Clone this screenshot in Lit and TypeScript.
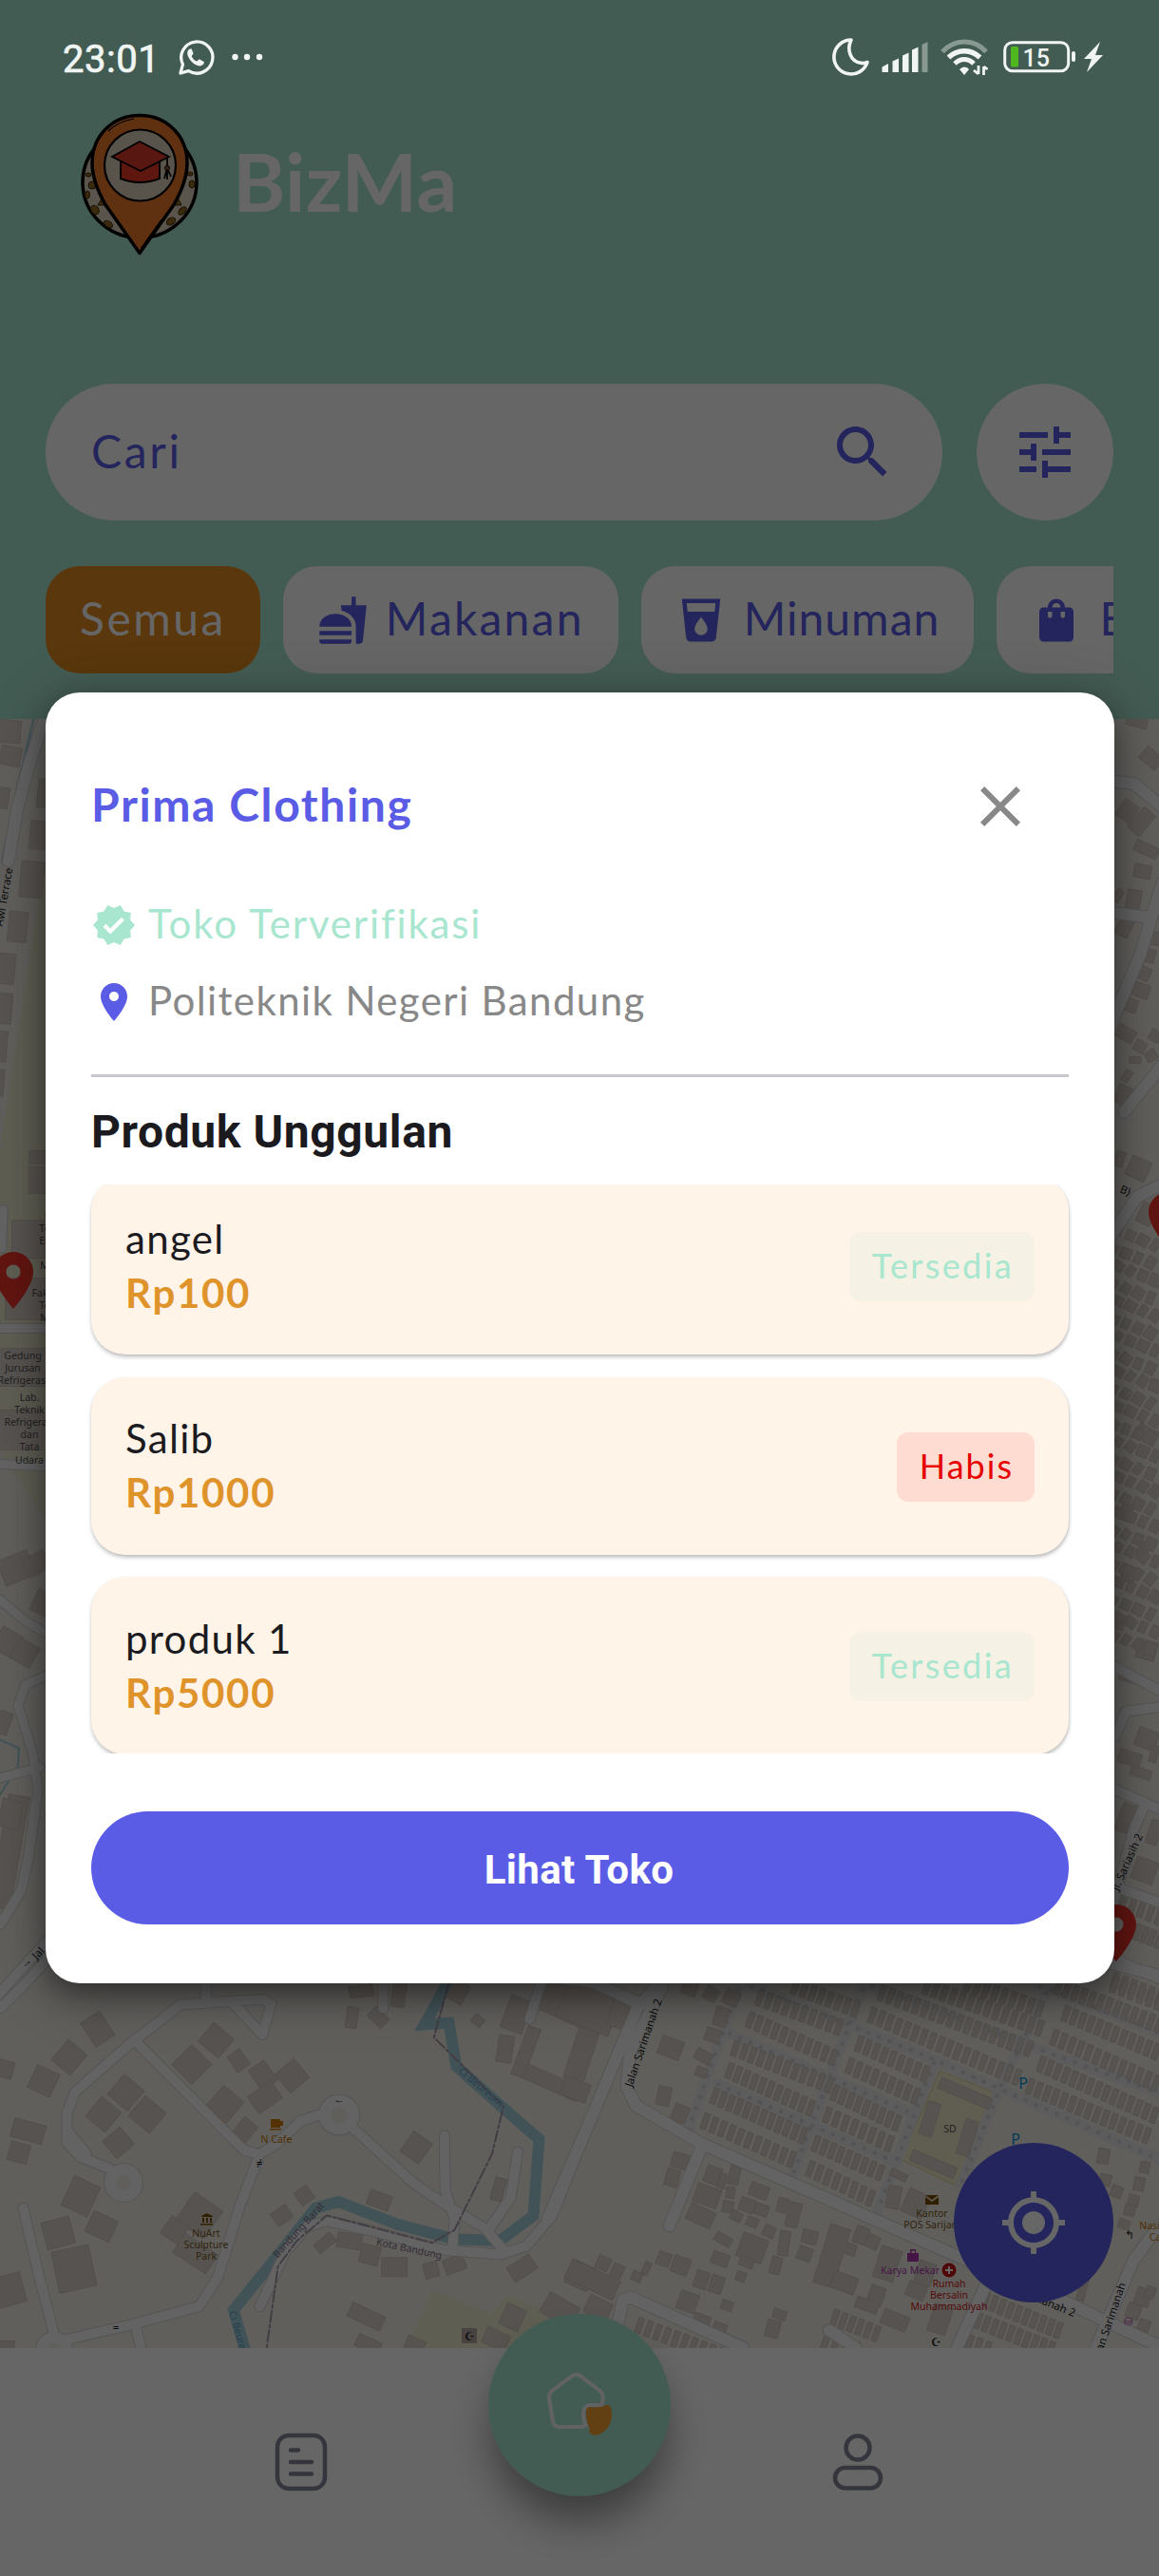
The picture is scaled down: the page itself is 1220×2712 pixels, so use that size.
import { LitElement, html, svg, css } from "lit";
import { customElement, property } from "lit/decorators.js";

const ICONS: Record<string, string> = {
  search:
    "M15.5 14h-.79l-.28-.27C15.41 12.59 16 11.11 16 9.5 16 5.91 13.09 3 9.5 3S3 5.91 3 9.5 5.91 16 9.5 16c1.61 0 3.09-.59 4.23-1.57l.27.28v.79l5 4.99L20.49 19l-4.99-5zm-6 0C7.01 14 5 11.99 5 9.5S7.01 5 9.5 5 14 7.01 14 9.5 11.99 14 9.5 14z",
  tune: "M3 17v2h6v-2H3zM3 5v2h10V5H3zm10 16v-2h8v-2h-8v-2h-2v6h2zM7 9v2H3v2h4v2h2V9H7zm14 4v-2H11v2h10zm-6-4h2V7h4V5h-4V3h-2v6z",
  food: "M18.06 22.99h1.66c.84 0 1.53-.64 1.63-1.46L23 5.05h-5V1h-1.97v4.05h-4.97l.3 2.34c1.71.47 3.31 1.32 4.27 2.26 1.44 1.42 2.43 2.89 2.43 5.29v8.05zM1 21.99V21h15.03v.99c0 .55-.45 1-1.01 1H2.01c-.56 0-1.01-.45-1.01-1zm15.03-7c0-8-15.03-8-15.03 0h15.03zM1.02 17h15v2h-15z",
  drink:
    "M3 2l2.01 18.23C5.13 21.23 5.97 22 7 22h10c1.03 0 1.87-.77 1.99-1.77L21 2H3zm9 17c-1.66 0-3-1.34-3-3 0-2 3-5.4 3-5.4s3 3.4 3 5.4c0 1.66-1.34 3-3 3zm6.33-11H5.67l-.44-4h13.55l-.45 4z",
  bag: "M18 6h-2c0-2.21-1.79-4-4-4S8 3.79 8 6H6c-1.1 0-2 .9-2 2v12c0 1.1.9 2 2 2h12c1.1 0 2-.9 2-2V8c0-1.1-.9-2-2-2zm-8 4c0 .55-.45 1-1 1s-1-.45-1-1V8h2v2zm2-6c1.1 0 2 .9 2 2h-4c0-1.1.9-2 2-2zm4 6c0 .55-.45 1-1 1s-1-.45-1-1V8h2v2z",
  close:
    "M19 6.41L17.59 5 12 10.59 6.41 5 5 6.41 10.59 12 5 17.59 6.41 19 12 13.41 17.59 19 19 17.59 13.41 12z",
  verified:
    "M23 12l-2.44-2.79.34-3.69-3.61-.82-1.89-3.2L12 2.96 8.6 1.5 6.71 4.69 3.1 5.5l.34 3.7L1 12l2.44 2.79-.34 3.7 3.61.82L8.6 22.5l3.4-1.47 3.4 1.46 1.89-3.19 3.61-.82-.34-3.69L23 12zm-12.91 4.72l-3.8-3.81 1.48-1.48 2.32 2.33 5.85-5.87 1.48 1.48-7.33 7.35z",
  place:
    "M12 2C8.13 2 5 5.13 5 9c0 5.25 7 13 7 13s7-7.75 7-13c0-3.87-3.13-7-7-7zm0 9.5c-1.38 0-2.5-1.12-2.5-2.5s1.12-2.5 2.5-2.5 2.5 1.12 2.5 2.5-1.12 2.5-2.5 2.5z",
  locate:
    "M12 8c-2.21 0-4 1.79-4 4s1.79 4 4 4 4-1.79 4-4-1.79-4-4-4zm8.94 3A8.994 8.994 0 0 0 13 3.06V1h-2v2.06A8.994 8.994 0 0 0 3.06 11H1v2h2.06A8.994 8.994 0 0 0 11 20.94V23h2v-2.06A8.994 8.994 0 0 0 20.94 13H23v-2h-2.06zM12 19c-3.87 0-7-3.13-7-7s3.13-7 7-7 7 3.13 7 7-3.13 7-7 7z",
};

@customElement("md-icon")
class MdIcon extends LitElement {
  @property() name = "";
  static styles = css`
    :host {
      display: block;
      flex: none;
      width: 72px;
      height: 72px;
    }
    .glyph {
      display: block;
      width: 100%;
      height: 100%;
      fill: currentColor;
    }
  `;
  render() {
    return html`<svg class="glyph" viewBox="0 0 24 24"><path d=${ICONS[this.name] ?? ""} /></svg>`;
  }
}

@customElement("status-bar")
class StatusBar extends LitElement {
  static styles = css`
    :host {
      display: flex;
      justify-content: space-between;
      align-items: center;
      box-sizing: border-box;
      height: 122px;
      padding: 0 57px 0 66px;
      color: #f0f5f3;
      font: 400 40px/60px Roboto, "Liberation Sans", sans-serif;
    }
    .side {
      display: flex;
      align-items: center;
    }
    .time {
      margin-right: 17px;
      padding-top: 3px;
      letter-spacing: 0.5px;
      -webkit-text-stroke: 0.7px currentColor;
    }
    svg {
      display: block;
    }
    .level {
      font: 500 25px Roboto, sans-serif;
      fill: #f0f5f3;
    }
  `;
  render() {
    return html`
      <div class="side">
        <span class="time">23:01</span>
        <svg width="92" height="42" viewBox="188 40 92 42">
          <path
            d="M193 77l2.4-9.2A16.6 16.6 0 1 1 201.500 74.600z"
            fill="none"
            stroke="#f0f5f3"
            stroke-width="3.300"
            stroke-linejoin="round"
          />
          <path
            d="M203 51.500c-3 1-3.600 5-1.500 9 2.200 4.200 6 7.700 10.500 8.800 3 .7 5.500-1 6-4l-5.200-3-2.600 2.300c-2.700-1.200-4.500-3.100-5.600-5.700l2-2.400-1.900-5z"
            fill="#f0f5f3"
          />
          <g fill="#f0f5f3">
            <circle cx="250.500" cy="60" r="3.200" />
            <circle cx="263" cy="60" r="3.200" />
            <circle cx="276" cy="60" r="3.200" />
          </g>
        </svg>
      </div>
      <div class="side">
        <svg width="288" height="42" viewBox="876 40 288 42">
          <path
            d="M897 42a18 18 0 1 0 17 23.500c-2.300.9-4.500 1.200-7 .8-11-1.800-15-14-10-24.300z"
            fill="none"
            stroke="#f0f5f3"
            stroke-width="3.600"
            stroke-linejoin="round"
          />
          <g fill="#f0f5f3">
            <path d="M929.500 70.500l6.500-3.500v9h-6.500z" />
            <path d="M940.500 64.500l6.500-3v14.500h-6.500z" />
            <path d="M951 58.500l6.500-3v20.500h-6.500z" />
            <path d="M961 52.500l6.500-3v26.500h-6.500z" />
            <path d="M971.500 47l6-3v32h-6z" opacity=".4" />
          </g>
          <g fill="none" stroke="#f0f5f3">
            <path d="M993 54.500c13-14 33-14 46 0" stroke-width="5" opacity=".4" />
            <path d="M999.500 60.500c9.500-9 23.500-9 33 0" stroke-width="5.500" />
            <path d="M1006 67c6-6 14-6 20 0" stroke-width="5" />
          </g>
          <path d="M1011 73q5-5 10 0l-5 6z" fill="#f0f5f3" />
          <path
            d="M1031 69v9m0 0l-5-4M1036.500 79v-9m0 0l4 3"
            fill="none"
            stroke="#f0f5f3"
            stroke-width="2.800"
          />
          <rect
            x="1058.700"
            y="44.700"
            width="67"
            height="30"
            rx="8"
            fill="none"
            stroke="#f0f5f3"
            stroke-width="3"
          />
          <rect x="1065" y="49" width="8" height="21.500" rx="1.500" fill="#4fb81f" />
          <rect x="1129" y="54" width="4" height="11" rx="2" fill="#f0f5f3" />
          <text class="level" x="1077.500" y="70">15</text>
          <path d="M1159 44l-17 18h8l-5 14 17-18h-8z" fill="#f0f5f3" />
        </svg>
      </div>
    `;
  }
}

type Pt = [number, number];

/** Maps the survey units of one tile to screen pixels. */
interface Tile {
  ox: number;
  oy: number;
  sx: number;
  sy: number;
}
const SW: Tile = { ox: 0, oy: 1900, sx: 2.529, sy: 2.613 };
const SE: Tile = { ox: 600, oy: 2060, sx: 2.529, sy: 3 };
const NE: Tile = { ox: 700, oy: 720, sx: 3, sy: 2.24 };
const E: Tile = { ox: 600, oy: 1400, sx: 2.529, sy: 2.24 };
const NW: Tile = { ox: 0, oy: 720, sx: 2.24, sy: 3 };
const W: Tile = { ox: 0, oy: 1220, sx: 2.613, sy: 2.24 };

const project = (t: Tile, x: number, y: number): Pt => [
  Math.round((t.ox + x / t.sx) * 10) / 10,
  Math.round((t.oy + y / t.sy) * 10) / 10,
];
const line = (t: Tile, flat: string) =>
  flat
    .split(" ")
    .map((p) => p.split(",").map(Number) as Pt)
    .map(([x, y]) => project(t, x, y).join(","))
    .join(" ");

const ROADS: [Tile, number, string[]][] = [
  [
    SW,
    10,
    [
      "95,0 75,150 55,240 0,330",
      "0,560 60,500 140,410",
      "-20,540 50,460 125,375",
      "548,480 548,540",
      "350,655 480,550 700,535 722,548 698,632 620,545",
      "365,640 200,790 178,850 178,930 215,970 290,1000",
      "182,900 230,960",
      "365,655 600,900 650,950 690,962 740,930 800,870 860,850",
      "940,890 1100,1040 1170,1090 1290,1165 1340,1225",
      "690,965 640,1100 580,1300 530,1380 350,1430 140,1480",
      "62,1110 100,1280 145,1460",
      "360,1430 375,1495",
      "1183,910 1185,1060 1210,1140 1205,1220",
      "1378,955 1360,1080 1300,1170",
      "692,1380 760,1230 820,1160 870,1145 1000,1175 1180,1225 1330,1237 1400,1215 1470,1130 1568,880",
      "1020,485 1020,560",
      "1440,490 1410,590",
    ],
  ],
  [
    SE,
    12,
    [
      "-60,830 60,500 130,300 180,160 250,70",
      "-10,70 60,80 190,150",
      "245,95 160,300 150,410 175,470 350,590 1030,945 1300,1080 1568,1230",
      "350,600 265,850",
      "130,1150 140,1085 160,1075 460,1235",
      "1568,850 1500,960 1400,1235",
      "690,1180 760,1235",
      "1440,20 1568,60",
      "1110,1030 1030,1235",
    ],
  ],
  [NE, 12, ["1420,230 1480,235 1570,290", "1570,470 1500,640 1410,800", "1420,540 1520,550", "1450,1010 1570,900", "1410,1300 1490,1210 1570,1180"]],
  [E, 10, ["1440,790 1568,850", "1450,960 1480,900 1568,890", "1440,1080 1568,1130", "1440,1370 1500,1180 1530,1120", "1440,1480 1568,1530", "1440,1310 1568,1350"]],
  [NW, 12, ["105,108 70,250 40,400 20,560"]],
  [W, 9, ["-5,400 130,400", "0,720 130,725", "8,120 5,210", "0,1040 70,1090 130,1120", "125,1220 70,1240 50,1290 90,1400 105,1490 90,1568", "0,1460 110,1435"]],
];

const DOTTED = [
  "450,100 310,560",
  "780,100 640,540 590,700",
  "1270,110 1150,400 1040,720",
  "970,330 820,800",
  "420,240 900,490",
  "390,400 850,640",
  "480,90 960,320 1568,640",
  "800,90 1220,280 1568,430",
  "1250,90 1568,240",
  "170,1080 460,1225",
];

const BUILDINGS: [Tile, [number, number, number, number, number][]][] = [
  [
    SW,
    [
      [15, 728, 16, 18, 15], [116, 760, 26, 26, 25], [184, 695, 26, 28, 40], [260, 617, 24, 30, -33],
      [335, 792, 28, 28, 40], [275, 852, 27, 27, 40], [392, 852, 29, 28, 40], [315, 930, 24, 24, -40],
      [75, 898, 34, 20, 15], [50, 957, 21, 20, 15], [215, 1077, 30, 34, 25], [155, 1178, 30, 29, -15],
      [270, 1160, 28, 24, 25], [197, 1277, 40, 44, -12], [25, 1335, 30, 32, -15], [510, 715, 30, 30, 45],
      [575, 648, 28, 26, 40], [635, 704, 16, 20, -35], [598, 825, 28, 30, 40], [652, 895, 18, 22, 40],
      [778, 746, 26, 26, -40], [700, 745, 20, 26, -35], [705, 805, 30, 22, -35], [962, 513, 25, 12, -8],
      [937, 585, 12, 22, 8], [1007, 585, 20, 14, 45], [1062, 520, 14, 28, 8], [1108, 943, 24, 26, 35],
      [1375, 577, 24, 36, 20], [1345, 672, 16, 28, 8], [1272, 594, 12, 10, 40], [1327, 1058, 12, 24, 15],
      [1010, 1088, 24, 16, 20], [810, 1075, 16, 16, -35], [750, 1130, 19, 16, -35], [865, 1205, 22, 12, -40],
      [930, 1200, 26, 16, 8], [985, 1238, 20, 20, 15], [1050, 1272, 27, 20, 0], [1148, 1280, 15, 16, -15],
      [1210, 1265, 22, 16, -20], [1390, 1275, 28, 18, -33], [530, 1130, 36, 36, 35], [465, 1170, 22, 22, 35],
      [520, 1235, 42, 24, 33], [975, 1408, 38, 16, 25], [1365, 1410, 22, 24, 25], [1490, 1390, 36, 24, 30],
      [1545, 1295, 26, 26, 25], [1105, 1485, 20, 14, 25], [1320, 1470, 26, 18, 25], [25, 130, 22, 120, 10],
      [1520, 545, 60, 40, 25], [1400, 680, 14, 54, 20], [1470, 765, 62, 16, 24], [1550, 690, 14, 50, 20],
      [1220, 515, 18, 22, 30], [18, 1485, 16, 8, 0], [980, 1485, 26, 14, 25],
    ],
  ],
  [
    SE,
    [
      [50, 160, 60, 42, 22], [130, 180, 18, 30, 15], [30, 310, 22, 56, 18], [15, 420, 28, 20, 20],
      [268, 288, 24, 20, 20], [318, 100, 16, 14, 20], [375, 118, 14, 14, 30], [430, 130, 16, 16, 25],
      [402, 190, 14, 20, 15], [380, 248, 16, 14, 20], [355, 315, 18, 12, 30], [350, 365, 12, 10, 20],
      [250, 440, 14, 20, 12], [293, 495, 16, 18, 22], [293, 645, 18, 16, 15], [272, 698, 14, 18, 15],
      [380, 690, 16, 18, 20], [438, 687, 11, 22, 12], [405, 708, 8, 16, 15], [365, 755, 26, 20, 20],
      [348, 818, 28, 18, 25], [427, 745, 9, 12, 8], [503, 740, 20, 14, 20], [472, 785, 16, 14, 20],
      [420, 790, 11, 12, 10], [443, 820, 12, 10, 30], [408, 893, 18, 10, 30], [485, 838, 12, 10, 20],
      [510, 800, 14, 12, 20], [530, 868, 12, 12, 25], [595, 815, 13, 26, 15], [566, 785, 11, 15, 15],
      [570, 905, 11, 26, 8], [548, 975, 11, 18, 15], [485, 920, 28, 26, 20], [400, 955, 18, 13, 20],
      [470, 965, 15, 10, 20], [455, 1010, 10, 10, 20], [638, 885, 16, 14, 15], [625, 938, 15, 14, 20],
      [697, 945, 22, 64, 17], [775, 880, 14, 18, 20], [748, 925, 10, 12, 15], [805, 900, 14, 14, 25],
      [250, 955, 14, 14, 20], [295, 975, 18, 18, 20], [203, 985, 7, 14, 25], [178, 1010, 11, 10, 25],
      [88, 968, 14, 14, 25], [126, 992, 12, 14, 25], [60, 1020, 56, 22, 25], [350, 1020, 14, 18, 18],
      [390, 1035, 14, 18, 18], [313, 1090, 20, 20, 20], [418, 1102, 12, 10, 20], [350, 1148, 18, 12, 20],
      [75, 1110, 26, 20, 25], [558, 1130, 14, 10, 20], [540, 1175, 14, 18, 15], [398, 1175, 14, 12, 20],
      [730, 1030, 26, 18, 20], [815, 1070, 16, 20, 20], [790, 1100, 24, 12, 20], [845, 970, 22, 34, 18],
      [865, 1148, 28, 16, 22], [922, 1055, 20, 16, 22], [985, 1145, 20, 30, 18], [920, 780, 24, 26, 25],
      [875, 690, 18, 8, 25], [862, 760, 14, 24, 10], [945, 1000, 18, 24, 18], [1052, 432, 58, 12, 23],
      [958, 512, 14, 36, 17], [1058, 572, 14, 38, 17], [967, 655, 50, 12, 23], [1420, 630, 12, 16, 10],
      [1425, 705, 12, 12, 15], [1455, 742, 12, 12, 20], [1475, 845, 12, 10, 20], [1500, 770, 11, 12, 15],
      [1515, 718, 11, 14, 10], [1490, 800, 11, 12, 15], [1530, 665, 10, 12, 10], [1525, 1075, 16, 18, 20],
      [1500, 1120, 14, 16, 20], [1545, 1060, 10, 12, 20], [1365, 1050, 8, 24, 15], [1528, 1165, 12, 12, 20],
    ],
  ],
  [
    NE,
    [
      [1490, 90, 22, 10, 15], [1535, 175, 22, 16, 40], [1460, 300, 18, 20, 35], [1505, 325, 16, 28, 40],
      [1520, 390, 26, 12, 25], [1508, 442, 18, 14, 12], [1480, 508, 15, 20, 10], [1450, 575, 15, 18, 25],
      [1525, 640, 15, 14, 15], [1510, 682, 15, 14, 25], [1500, 722, 20, 15, 20], [1468, 757, 16, 14, 20],
      [1430, 500, 8, 14, 30], [1548, 600, 10, 14, 10], [1455, 825, 20, 14, 30], [1500, 855, 12, 12, 30],
      [1485, 887, 12, 7, 5], [1535, 877, 12, 11, -30], [1458, 925, 8, 13, 35], [1447, 970, 16, 20, 25],
      [1495, 1143, 22, 22, 25], [1435, 1120, 10, 16, 20], [1520, 1250, 16, 22, 25], [1548, 830, 12, 12, 30],
    ],
  ],
  [
    E,
    [
      [1488, 575, 15, 17, 20], [1525, 520, 11, 17, 12], [1490, 820, 22, 10, 15], [1535, 965, 22, 20, 20],
      [1490, 1010, 24, 14, 18], [1520, 1045, 22, 10, 18], [1490, 1155, 24, 30, 20], [1530, 1275, 24, 24, 20],
      [1555, 1185, 12, 26, 18], [1535, 755, 20, 20, 15], [1535, 245, 22, 14, 30], [1480, 430, 12, 18, 20],
      [1555, 1000, 8, 18, 15], [1465, 690, 10, 16, 20],
    ],
  ],
  [
    NW,
    [
      [20, 150, 26, 24, 5], [25, 228, 22, 20, 12], [5, 360, 14, 22, 8], [100, 345, 10, 30, 6],
      [95, 478, 22, 30, 5], [75, 618, 24, 38, 5], [42, 767, 20, 32, 5], [15, 900, 18, 32, 5],
      [10, 1025, 16, 32, 5], [5, 1145, 10, 32, 5], [0, 1260, 8, 28, 5], [95, 1495, 24, 14, 0],
    ],
  ],
  [
    W,
    [
      [105, 50, 20, 28, 0], [82, 190, 38, 40, 0], [70, 330, 42, 44, 0], [62, 492, 50, 40, 0],
      [55, 640, 50, 42, 0], [45, 965, 34, 28, -22], [100, 955, 26, 20, -30], [125, 1050, 26, 24, 25],
      [20, 1140, 24, 26, 30], [68, 1165, 24, 24, 30], [10, 1330, 14, 24, 20], [30, 1545, 22, 30, 12],
    ],
  ],
];

/** Terraced rows: first and last house of each row. */
const ROWS: [Tile, number, number, number, number][] = [
  [SE, 505, 130, 715, 222], [SE, 480, 200, 700, 318], [SE, 440, 290, 690, 405], [SE, 425, 360, 640, 478],
  [SE, 385, 440, 620, 565], [SE, 360, 520, 590, 640], [SE, 655, 590, 825, 682], [SE, 640, 670, 800, 762],
  [SE, 705, 430, 870, 525], [SE, 685, 500, 850, 590], [SE, 770, 275, 945, 370], [SE, 745, 345, 920, 440],
  [SE, 600, 95, 760, 165], [SE, 830, 115, 1220, 290], [SE, 805, 185, 1190, 380], [SE, 950, 95, 1250, 225],
  [SE, 1060, 85, 1250, 165], [SE, 1320, 180, 1560, 300], [SE, 1290, 255, 1560, 400], [SE, 1255, 340, 1555, 500],
  [SE, 1225, 410, 1535, 565], [SE, 1300, 95, 1568, 215], [SE, 1450, 75, 1568, 130], [SE, 705, 1140, 815, 1190],
  [SE, 680, 1215, 760, 1240], [SE, 1085, 1075, 1300, 1180], [SE, 1065, 1140, 1280, 1240],
  [SE, 185, 1165, 400, 1260], [SE, 1040, 1210, 1110, 1240],
  [E, 1450, 1340, 1568, 1385], [E, 1510, 1420, 1568, 1440], [E, 1450, 1545, 1568, 1585],
];

const SCATTER: Pt[] = [];
for (let r = 0; r < 24; r++) {
  for (let c = 0; c < 4; c++) SCATTER.push([1177 + c * 13 - (r % 2) * 5, 1296 + r * 18.5 + c * 5]);
}

const quad = (cx: number, cy: number, w: number, h: number, a: number) =>
  svg`<rect x=${cx - w / 2} y=${cy - h / 2} width=${w} height=${h} transform="rotate(${a} ${cx} ${cy})" />`;

const houses = (t: Tile, x1: number, y1: number, x2: number, y2: number) => {
  const a = project(t, x1, y1);
  const b = project(t, x2, y2);
  const n = Math.max(1, Math.round(Math.hypot(b[0] - a[0], b[1] - a[1]) / 9.6));
  return Array.from({ length: n + 1 }, (_, i) =>
    quad(a[0] + ((b[0] - a[0]) * i) / n, a[1] + ((b[1] - a[1]) * i) / n, 6, 17, 19),
  );
};

const label = (x: number, y: number, text: string, cls = "", rot = 0) =>
  svg`<text class="lbl ${cls}" x=${x} y=${y} transform="rotate(${rot} ${x} ${y})">${text}</text>`;

const marker = (x: number, y: number) =>
  svg`<path d=${ICONS.place} class="pin" transform="translate(${x} ${y}) scale(3)" />`;

@customElement("street-map")
class StreetMap extends LitElement {
  static styles = css`
    :host {
      display: block;
      overflow: hidden;
      background: #f0ede5;
    }
    svg {
      display: block;
      width: 100%;
      height: 100%;
    }
    .bld {
      fill: #d9d0c9;
      stroke: #c9beb6;
      stroke-width: 0.8;
    }
    .rd {
      fill: none;
      stroke-linejoin: round;
      stroke-linecap: round;
    }
    .casing {
      stroke: #d2d0d0;
    }
    .top {
      stroke: #f8f8fa;
    }
    .alley {
      stroke: #e6e5e8;
      stroke-width: 11;
    }
    .dots {
      stroke: #cfcfd8;
      stroke-width: 4;
      stroke-dasharray: 4 8;
      stroke-linecap: butt;
    }
    .water {
      stroke: #a5cfdb;
      stroke-width: 12;
      stroke-linejoin: miter;
    }
    .border {
      stroke: #a796a8;
      stroke-width: 2;
      stroke-dasharray: 12 3 3 3;
    }
    .lbl {
      font: 10.5px "Noto Sans", sans-serif;
      text-anchor: middle;
      fill: #555;
    }
    .street {
      font-size: 11.5px;
      fill: #222;
    }
    .cafe {
      fill: #c77400;
    }
    .brown {
      fill: #7a5a20;
    }
    .river {
      fill: #5f9fc4;
    }
    .admin {
      fill: #84718a;
    }
    .shop {
      fill: #ac39ac;
    }
    .health {
      fill: #d01818;
    }
    .park {
      font-size: 16px;
      fill: #0092da;
    }
    .pin {
      fill: #f5352c;
    }
  `;
  render() {
    return html`<svg viewBox="0 757 1220 1715" preserveAspectRatio="none">
      <polygon points="0,1210 48,900 48,1450 0,1450" fill="#eceacf" />
      <polygon points="0,1530 48,1600 48,1450 0,1450" fill="#ecead2" />
      <polygon points=${line(SW, "1150,1335 1310,1400 1350,1350 1470,1400 1370,1500 1080,1500")} fill="#edecce" />
      <polygon points=${line(SE, "985,360 1140,435 1030,725 880,640")} fill="#eeebc8" stroke="#d8d09a" />

      ${DOTTED.map((d) => svg`<polyline class="rd alley" points=${line(SE, d)} />`)}
      ${DOTTED.map((d) => svg`<polyline class="rd dots" points=${line(SE, d)} />`)}
      <g class="bld">
        ${BUILDINGS.map(([t, list]) =>
          list.map(([x, y, w, h, a]) => {
            const [cx, cy] = project(t, x, y);
            return quad(cx, cy, w, h, a);
          }),
        )}
        ${ROWS.map(([t, a, b, c, d]) => houses(t, a, b, c, d))}
        ${SCATTER.map(([x, y], i) => quad(x, y, 8 + (i % 3) * 2, 10 + (i % 4), 22 + (i % 5) * 4))}
      </g>

      <polyline class="rd water" points=${line(SW, "1210,450 1160,550 1130,605 1195,600 1215,720 1340,835 1435,920 1420,1130 1330,1200 1210,1195 1060,1155 900,1092 840,1110 740,1240 622,1390 655,1510")} />
      <polyline class="rd" stroke="#a5cfdb" stroke-width="2.500" points=${line(NW, "80,108 40,330 5,560")} />
      <polyline class="rd" stroke="#a5cfdb" stroke-width="2" points=${line(W, "0,1370 52,1390 50,1430 0,1500")} />

      ${ROADS.map(([t, w, ls]) =>
        ls.map((l) => svg`<polyline class="rd casing" stroke-width=${w + 2} points=${line(t, l)} />`),
      )}
      <g fill="#f0ede5" class="casing">
        <circle cx="357" cy="2226.500" r="15" stroke-width="14" />
        <circle cx="130" cy="2298" r="14" stroke-width="14" />
        <circle cx="57" cy="2474" r="13" stroke-width="14" />
      </g>
      ${ROADS.map(([t, w, ls]) =>
        ls.map((l) => svg`<polyline class="rd top" stroke-width=${w} points=${line(t, l)} />`),
      )}
      <g fill="#f0ede5" class="top">
        <circle cx="357" cy="2226.500" r="15" stroke-width="12" />
        <circle cx="130" cy="2298" r="14" stroke-width="12" />
        <circle cx="57" cy="2474" r="13" stroke-width="12" />
      </g>
      <polyline class="rd border" points=${line(SW, "1195,490 1155,640 1340,830 1310,960 1210,1170 1150,1205 870,1130 790,1200 740,1270 710,1495")} />

      ${label(291, 2256, "N Cafe", "cafe")}
      <path d="M285 2231h10v2h3v5h-3v2h-10zM284 2241h12v1.500h-12z" fill="#d27a00" />
      ${label(217, 2355, "NuArt", "brown")} ${label(217, 2367, "Sculpture", "brown")}
      ${label(217, 2379, "Park", "brown")}
      <path d="M212 2333l5.500-3 6.500 3v1h-12zM213 2335h2v5h-2zM217 2335h2v5h-2zM221 2335h2v5h-2zM211 2341h13v1.500h-13z" fill="#7a5200" />
      ${label(430, 2371, "Kota Bandung", "admin", 12)} ${label(317, 2350, "Bandung Barat", "admin", -48)}
      ${label(504, 2200, "Ci Beureum", "river", 40)} ${label(249, 2462, "Ci Beureum", "river", 74)}
      ${label(43, 2059, "Jal", "street", -45)} ${label(30, 2069, "→", "street", -42)}
      ${label(357, 2214, "←", "street")} ${label(273, 2281, "≠", "street")} ${label(122, 2454, "=", "street")}

      ${label(681, 2152, "Jalan Sarimanah 2", "street", -71)} ${label(1077, 2199, "P", "park")}
      ${label(1069, 2258, "P", "park")} ${label(1000, 2245, "SD")}
      ${label(981, 2334, "Kantor", "brown")} ${label(981, 2346, "POS Sarijadi", "brown")}
      <path d="M974 2311h14l-7 5zM974 2313l7 5 7-5v8h-14z" fill="#7a5200" />
      ${label(958, 2394, "Karya Mekar", "shop")}
      <path d="M955 2372h3v-4h6v4h3v9h-12zM959.500 2372h3.500v-2.500h-3.500z" fill="#ac39ac" fill-rule="evenodd" />
      <circle cx="999" cy="2390" r="7.500" fill="#c81010" />
      <path d="M999 2386v8M995 2390h8" stroke="#fff" stroke-width="2" />
      ${label(999, 2408, "Rumah", "health")} ${label(999, 2420, "Bersalin", "health")}
      ${label(999, 2432, "Muhammadiyah", "health")}
      ${label(1210, 2347, "Nasi", "cafe")} ${label(1216, 2359, "Ca", "cafe")}
      ${label(1085, 2421, "Jalan Sarimanah 2", "street", 22)} ${label(1171, 2446, "Jalan Sarimanah", "street", -71)}
      ${label(985, 2470, "☪", "street")} ${label(1187, 2448, "⛁", "shop")}
      <rect x="486" y="2451" width="16" height="16" fill="#b3a9a1" />
      ${label(494, 2464, "☪", "street")}
      ${label(1190, 1962, "Jl. Sariasih 2", "street", -66)} ${label(1183, 1257, "B)", "street", 24)}
      ${label(1189, 2357, "↰", "street")}

      ${label(8, 945, "Awi Terrace", "street", -80)}
      ${label(24, 1431, "Gedung")} ${label(24, 1444, "Jurusan")} ${label(24, 1457, "Refrigerasi")}
      ${label(31, 1475, "Lab.")} ${label(31, 1488, "Teknik")} ${label(31, 1501, "Refrigerasi")}
      ${label(31, 1514, "dan")} ${label(31, 1527, "Tata")} ${label(31, 1541, "Udara")}
      ${label(57, 1284, "Lab.")} ${label(57, 1297, "Teknik")} ${label(57, 1310, "Energi")}
      ${label(57, 1336, "Mesin")} ${label(54, 1365, "Fakultas")} ${label(57, 1378, "Teknik")}
      ${label(57, 1391, "Mesin")}

      ${marker(-22, 1312)} ${marker(1194, 1249)} ${marker(1139, 1999)}
    </svg>`;
  }
}

@customElement("product-row")
class ProductRow extends LitElement {
  @property() name = "";
  @property() price = "";
  @property({ type: Boolean }) soldOut = false;
  static styles = css`
    :host {
      display: flex;
      flex: none;
      align-items: center;
      justify-content: space-between;
      box-sizing: border-box;
      height: 187px;
      padding: 0 36px;
      border-radius: 36px;
      background: #fff4e7;
      box-shadow: 0 3px 4px rgba(0, 0, 0, 0.2), 1px 1px 3px rgba(0, 0, 0, 0.1);
      font: 400 42px/57px Lato, "Open Sans", sans-serif;
      letter-spacing: 1.3px;
      color: #1b1b1f;
    }
    .price {
      color: #df932b;
      font-weight: 700;
      letter-spacing: 1.7px;
    }
    .badge {
      box-sizing: border-box;
      height: 73px;
      margin-top: 2px;
      padding: 0 22px 0 24px;
      border-radius: 12px;
      background: #f5f2e5;
      color: #a8e6cf;
      font-size: 36px;
      line-height: 71px;
      letter-spacing: 2.4px;
    }
    .out {
      background: #ffdcd2;
      color: #e60000;
      letter-spacing: 2px;
    }
  `;
  render() {
    return html`
      <div>
        <div>${this.name}</div>
        <div class="price">${this.price}</div>
      </div>
      <div class="badge ${this.soldOut ? "out" : ""}">${this.soldOut ? "Habis" : "Tersedia"}</div>
    `;
  }
}

@customElement("store-dialog")
class StoreDialog extends LitElement {
  static styles = css`
    :host {
      display: flex;
      flex-direction: column;
      box-sizing: border-box;
      width: 1125px;
      height: 1359px;
      padding: 48px;
      border-radius: 36px;
      background: #fff;
      box-shadow: 0 12px 28px rgba(0, 0, 0, 0.35), 0 10px 60px rgba(0, 0, 0, 0.28);
      font-family: Lato, "Open Sans", sans-serif;
    }
    .head {
      display: flex;
      align-items: center;
      justify-content: space-between;
      height: 144px;
      padding-right: 36px;
      color: #888;
    }
    .title {
      color: #5a5ce6;
      font-size: 48px;
      font-weight: 700;
      line-height: 60px;
      letter-spacing: 1.6px;
      padding-bottom: 4px;
    }
    .info {
      display: flex;
      align-items: center;
      gap: 12px;
      height: 53px;
      margin-top: 26px;
      color: #888;
      font-size: 42px;
      line-height: 50px;
      letter-spacing: 1.4px;
    }
    .info span {
      padding-bottom: 4px;
    }
    .info.ok {
      color: #a8e6cf;
      letter-spacing: 1.85px;
    }
    .info.addr {
      margin-top: 28px;
    }
    .info md-icon {
      width: 48px;
      height: 48px;
    }
    .addr md-icon {
      color: #5a5ce6;
    }
    .rule {
      height: 3px;
      margin-top: 50px;
      background: #c7c6ca;
    }
    .section {
      margin-top: 22px;
      font: 700 48px/72px Roboto, sans-serif;
      letter-spacing: 0.6px;
      color: #1b1b1f;
    }
    .clip {
      height: 599px;
      margin: 19px -12px 0;
      overflow: hidden;
    }
    .list {
      display: flex;
      flex-direction: column;
      gap: 23.5px;
      margin: -8px 12px 0;
    }
    .cta {
      display: flex;
      align-items: center;
      justify-content: center;
      height: 119px;
      margin-top: 61px;
      padding: 5px 2px 0 0;
      box-sizing: border-box;
      border-radius: 60px;
      background: #5a5ce6;
      color: #fff;
      font: 700 42px/60px Roboto, sans-serif;
      letter-spacing: 0.4px;
    }
  `;
  render() {
    return html`
      <div class="head">
        <div class="title">Prima Clothing</div>
        <md-icon name="close"></md-icon>
      </div>
      <div class="info ok"><md-icon name="verified"></md-icon><span>Toko Terverifikasi</span></div>
      <div class="info addr"><md-icon name="place"></md-icon><span>Politeknik Negeri Bandung</span></div>
      <div class="rule"></div>
      <div class="section">Produk Unggulan</div>
      <div class="clip">
        <div class="list">
          <product-row name="angel" price="Rp100"></product-row>
          <product-row name="Salib" price="Rp1000" .soldOut=${true}></product-row>
          <product-row name="produk 1" price="Rp5000"></product-row>
        </div>
      </div>
      <div class="cta">Lihat Toko</div>
    `;
  }
}

@customElement("app-root")
class AppRoot extends LitElement {
  static styles = css`
    :host {
      display: block;
      position: relative;
      width: 1220px;
      height: 2712px;
      overflow: hidden;
      font-family: Lato, "Open Sans", sans-serif;
    }
    .page {
      display: flex;
      flex-direction: column;
      height: 100%;
    }
    .header {
      flex: none;
      box-sizing: border-box;
      height: 757px;
      padding: 119px 48px 0;
      background: #a8e6cf;
      color: #5a5ce6;
    }
    .brand {
      display: flex;
      align-items: center;
      gap: 36px;
      height: 150px;
      padding-left: 37px;
      color: #fff;
      font-size: 84px;
      font-weight: 700;
      line-height: 100px;
      letter-spacing: 0.4px;
    }
    .brand svg {
      display: block;
    }
    .brand span {
      padding-bottom: 6px;
    }
    .tools {
      display: flex;
      gap: 36px;
      margin-top: 135px;
    }
    .search {
      flex: 1;
      display: flex;
      align-items: center;
      justify-content: space-between;
      height: 144px;
      box-sizing: border-box;
      padding: 0 48px;
      border-radius: 72px;
      background: #fff;
      font-size: 48px;
      letter-spacing: 2.7px;
    }
    .search span {
      padding-bottom: 4px;
    }
    .filter {
      display: grid;
      place-items: center;
      width: 144px;
      height: 144px;
      border-radius: 50%;
      background: #fff;
    }
    .chips {
      display: flex;
      gap: 24px;
      margin-top: 48px;
      overflow: hidden;
    }
    .chip {
      flex: none;
      display: flex;
      align-items: center;
      gap: 18px;
      height: 113px;
      box-sizing: border-box;
      padding: 0 36px;
      border-radius: 36px;
      background: #fff;
      font-size: 48px;
      line-height: 60px;
      letter-spacing: 2.2px;
    }
    .chip.tight {
      letter-spacing: 1.05px;
    }
    .chip span {
      padding-bottom: 4px;
    }
    .chip md-icon {
      width: 54px;
      height: 54px;
    }
    .chip.active {
      background: #e08a1e;
      color: #fff;
      letter-spacing: 2.5px;
    }
    .mapwrap {
      flex: 1;
      position: relative;
      min-height: 0;
    }
    street-map {
      height: 100%;
    }
    .locate {
      position: absolute;
      right: 48px;
      bottom: 48px;
      display: grid;
      place-items: center;
      width: 168px;
      height: 168px;
      border-radius: 50%;
      background: #5a5ce6;
      color: #fff;
    }
    .nav {
      flex: none;
      position: relative;
      display: grid;
      grid-template-columns: repeat(3, 293px);
      grid-template-rows: 240px;
      justify-content: center;
      place-items: center;
      height: 240px;
      background: #fff;
    }
    .nav svg {
      display: block;
    }
    .home {
      display: grid;
      place-items: center;
      width: 192px;
      height: 192px;
      margin-bottom: 120px;
      border-radius: 50%;
      background: #a8e6cf;
      box-shadow: 0 30px 44px -4px rgba(0, 0, 0, 0.42);
    }
    .scrim {
      position: absolute;
      inset: 0;
      display: flex;
      align-items: center;
      justify-content: center;
      box-sizing: border-box;
      padding: 105px 0 0 1px;
      background: rgba(0, 0, 0, 0.6);
    }
    .status {
      position: absolute;
      top: 0;
      left: 0;
      right: 0;
    }
  `;

  private logo() {
    return html`<svg width="124" height="150" viewBox="85 119 124 150">
      <ellipse cx="147" cy="192" rx="60" ry="58.500" fill="#ded2bd" stroke="#000" stroke-width="3.500" />
      <g fill="#96691f" stroke="#3a2a12" stroke-width="1">
        <ellipse cx="93" cy="184" rx="3" ry="2" />
        <ellipse cx="97" cy="195" rx="4" ry="4" />
        <ellipse cx="92" cy="205" rx="2.500" ry="4" />
        <path d="M108 207l-5 9h10z" />
        <ellipse cx="100" cy="221" rx="4" ry="5" transform="rotate(-35 100 221)" />
        <ellipse cx="114" cy="236" rx="5" ry="3" transform="rotate(35 114 236)" />
        <ellipse cx="200" cy="183" rx="3" ry="2" />
        <ellipse cx="202" cy="194" rx="3" ry="4" />
        <path d="M187 208l-5 8h9z" />
        <ellipse cx="192" cy="222" rx="5" ry="3" transform="rotate(-45 192 222)" />
        <ellipse cx="180" cy="233" rx="5" ry="3.500" transform="rotate(-30 180 233)" />
      </g>
      <path
        d="M147 121.500c-29 0-50 22-50 50 0 16 6 30 14 44l36 51 36-51c8-14 14-28 14-44 0-28-21-50-50-50z"
        fill="#f07a2c"
        stroke="#000"
        stroke-width="3.500"
        stroke-linejoin="round"
      />
      <path d="M114 138q10-10 27-13M148 262l22-31" fill="none" stroke="#000" stroke-width="1.200" />
      <circle cx="147.500" cy="174" r="37.500" fill="#ddd3bc" stroke="#000" stroke-width="2.200" />
      <path d="M127 168v20q20 8 41 0v-20z" fill="#e83a26" stroke="#000" stroke-width="2" />
      <path d="M147 149l31 16-30 15-30-15z" fill="#dc3b2b" stroke="#000" stroke-width="1.800" />
      <path d="M176 166v11M176 177l-3 11M176 177l4 9M176 178v11" stroke="#000" stroke-width="1.800" fill="none" />
      <circle cx="176" cy="177" r="2.500" fill="#8a5a30" stroke="#000" />
    </svg>`;
  }

  render() {
    return html`
      <div class="page">
        <div class="header">
          <div class="brand">${this.logo()}<span>BizMa</span></div>
          <div class="tools">
            <div class="search"><span>Cari</span><md-icon name="search"></md-icon></div>
            <div class="filter"><md-icon name="tune"></md-icon></div>
          </div>
          <div class="chips">
            <div class="chip active"><span>Semua</span></div>
            <div class="chip"><md-icon name="food"></md-icon><span>Makanan</span></div>
            <div class="chip tight"><md-icon name="drink"></md-icon><span>Minuman</span></div>
            <div class="chip"><md-icon name="bag"></md-icon><span>E</span></div>
          </div>
        </div>
        <div class="mapwrap">
          <street-map></street-map>
          <div class="locate"><md-icon name="locate"></md-icon></div>
        </div>
        <div class="nav">
          <svg width="60" height="64" viewBox="287 2560 60 64" fill="none" stroke="#84849c" stroke-width="4.500" stroke-linecap="round">
            <rect x="292" y="2564" width="50" height="56" rx="12" />
            <path d="M306 2579.500h8M306 2592h22M306 2604.500h22" />
          </svg>
          <div class="home">
            <svg width="72" height="72" viewBox="576 2499 72 72">
              <path
                d="M617 2558h-26q-6 0-7-6l-4-24q-.5-5 3-8l21-15.500q4.500-3 9 0l20.500 15.500q3.500 3 3 8l-1 8q-17-4-19 5-1.500 8 3 17"
                fill="none"
                stroke="#f6f6f6"
                stroke-width="4"
                stroke-linejoin="round"
              />
              <path
                d="M619 2540q1-3 5-3 4 1 8 0 4 0 6.500-1.500 2.500-1 5 0 2 2 2.500 8 .5 8-4 15-5 6-11 8-6 1-9-3l.5-4q-4-8-3.500-19.500z"
                fill="#f5a030"
              />
            </svg>
          </div>
          <svg width="60" height="64" viewBox="873 2560 60 64" fill="none" stroke="#84849c" stroke-width="4.500">
            <circle cx="903" cy="2577" r="12.500" />
            <rect x="879" y="2598" width="48" height="21.500" rx="10.700" />
          </svg>
        </div>
      </div>
      <div class="scrim"><store-dialog></store-dialog></div>
      <status-bar class="status"></status-bar>
    `;
  }
}
